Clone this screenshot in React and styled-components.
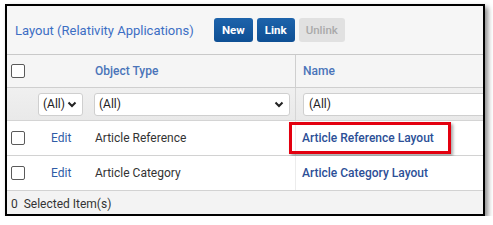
import React from "react";
import styled, { createGlobalStyle } from "styled-components";

const GlobalStyle = createGlobalStyle`
  body {
    margin: 0;
    background: #ffffff;
    font-family: Roboto, "Liberation Sans", Arial, sans-serif;
  }
`;

const rows = [
  { type: "Article Reference", name: "Article Reference Layout", marked: true },
  { type: "Article Category", name: "Article Category Layout", marked: false },
];

const App = () => {
  return (
    <>
      <GlobalStyle />
      <Frame>
        <Toolbar>
          <Title>Layout (Relativity Applications)</Title>
          <Buttons>
            <Button>New</Button>
            <Button>Link</Button>
            <Button disabled>Unlink</Button>
          </Buttons>
        </Toolbar>

        <HeadRow>
          <Cell>
            <Check />
          </Cell>
          <Cell />
          <HeadCell>Object Type</HeadCell>
          <HeadCell divider>Name</HeadCell>
        </HeadRow>

        <FilterRow>
          <Cell />
          <Cell>
            <Select small>
              <span>(All)</span>
              <Chevron />
            </Select>
          </Cell>
          <Cell>
            <Select>
              <span>(All)</span>
              <Chevron />
            </Select>
          </Cell>
          <Cell divider>
            <TextBox>(All)</TextBox>
          </Cell>
        </FilterRow>

        {rows.map((r) => (
          <DataRow key={r.type}>
            <Cell>
              <Check />
            </Cell>
            <EditCell>Edit</EditCell>
            <TextCell>{r.type}</TextCell>
            <NameCell divider>
              <NameLink marked={r.marked}>{r.name}</NameLink>
            </NameCell>
          </DataRow>
        ))}

        <Footer>0&nbsp; Selected Item(s)</Footer>
      </Frame>
    </>
  );
};

const Chevron = () => (
  <svg width="10" height="7" viewBox="0 0 10 7">
    <path d="M1.5 1.5 L5 5 L8.5 1.5" fill="none" stroke="#222" strokeWidth="2" />
  </svg>
);

export default App;

const Frame = styled.div`
  margin: 4px 0 0 5px;
  width: 476px;
  height: 208px;
  border: 2px solid #000;
  box-shadow: 3px 3px 5px rgba(0, 0, 0, 0.45);
  background: #f6f6f6;
  overflow: hidden;
  display: flex;
  flex-direction: column;
`;

const Toolbar = styled.div`
  height: 48px;
  display: flex;
  align-items: center;
  padding-left: 8px;
  border-bottom: 1px solid #c9c9c9;
  flex-shrink: 0;
`;

const Title = styled.div`
  font-size: 13px;
  color: #3d6ec4;
  width: 199px;
`;

const Buttons = styled.div`
  display: flex;
  gap: 4px;
`;

const Button = styled.button`
  height: 24px;
  padding: 0 8px;
  border: none;
  border-radius: 3px;
  font-family: Roboto, "Liberation Sans", Arial, sans-serif;
  font-size: 11.5px;
  font-weight: 700;
  color: #fff;
  background: linear-gradient(#1d63ab, #0e4f94);

  &:disabled {
    background: #e1e1e1;
    color: #aaaaaa;
    font-weight: 500;
    padding: 0 7px;
  }
`;

const gridCols = "28px 55px 205px 1fr";

const HeadRow = styled.div`
  display: grid;
  grid-template-columns: ${gridCols};
  height: 32px;
  background: #f5f5f5;
  border-bottom: 1px solid #cfcfcf;
  flex-shrink: 0;
`;

const FilterRow = styled.div`
  display: grid;
  grid-template-columns: ${gridCols};
  height: 32px;
  background: linear-gradient(#f0f0f0, #e9e9e9);
  border-bottom: 1px solid #d4d4d4;
  flex-shrink: 0;
`;

const DataRow = styled.div`
  display: grid;
  grid-template-columns: ${gridCols};
  height: 34px;
  background: #fff;
  border-bottom: 1px solid #d2d2d2;
  flex-shrink: 0;

  &:last-of-type {
    border-bottom: 2px solid #c4c4c4;
  }
`;

const Cell = styled.div`
  display: flex;
  align-items: center;
  padding-left: 4px;
  min-width: 0;
  border-left: ${(p) => (p.divider ? "1px solid #d6d6d6" : "none")};
`;

const HeadCell = styled(Cell)`
  font-size: 12px;
  font-weight: 500;
  color: #4a74b9;
  padding-left: ${(p) => (p.divider ? "7px" : "5px")};
  border-left: ${(p) => (p.divider ? "1px solid #cfcfcf" : "none")};
`;

const EditCell = styled(Cell)`
  font-size: 12px;
  color: #2f5ca6;
  padding-left: 16px;
`;

const TextCell = styled(Cell)`
  font-size: 12px;
  color: #333;
  padding-left: 5px;
`;

const NameCell = styled(Cell)`
  border-left: 1px solid #ececec;
  padding-left: 0;
`;

const NameLink = styled.div`
  font-size: 12px;
  font-weight: 500;
  color: #2c4f97;
  height: 26px;
  display: flex;
  align-items: center;
  padding: 0 14px 0 10px;
  margin-left: -7px;
  border: 3px solid ${(p) => (p.marked ? "#e3000f" : "transparent")};
  box-shadow: ${(p) => (p.marked ? "2px 2px 3px rgba(0,0,0,0.35)" : "none")};
`;

const Check = styled.span`
  width: 12px;
  height: 12px;
  border: 1px solid #5a5a5a;
  border-radius: 2px;
  background: #fff;
`;

const Select = styled.div`
  width: ${(p) => (p.small ? "45px" : "196px")};
  height: 23px;
  box-sizing: border-box;
  margin-left: ${(p) => (p.small ? "-1px" : "0")};
  border: 1px solid #cfcfcf;
  border-radius: 3px;
  background: #fff;
  display: flex;
  align-items: center;
  justify-content: space-between;
  padding: 0 5px 0 4px;
  font-size: 12px;
  color: #222;
`;

const TextBox = styled.div`
  height: 23px;
  box-sizing: border-box;
  flex: 1;
  margin-left: 3px;
  margin-right: -10px;
  border: 1px solid #cfcfcf;
  border-radius: 3px;
  background: #fff;
  display: flex;
  align-items: center;
  padding-left: 5px;
  font-size: 12px;
  color: #222;
`;

const Footer = styled.div`
  flex: 1;
  display: flex;
  align-items: center;
  padding-left: 4px;
  padding-top: 2px;
  font-size: 12px;
  color: #333;
  background: #f3f3f3;
`;
